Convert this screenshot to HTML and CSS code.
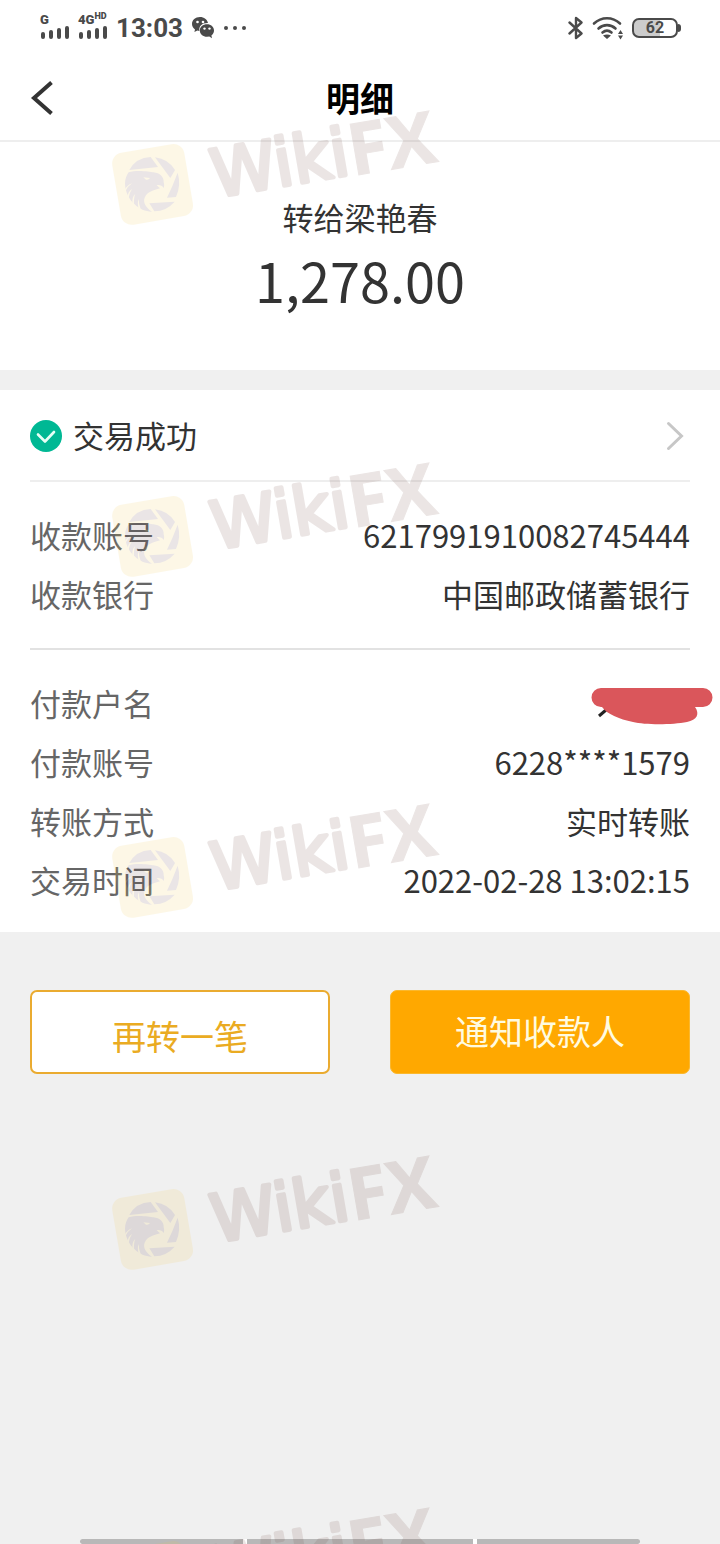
FILE: index.html
```html
<!DOCTYPE html>
<html lang="zh-CN">
<head>
  <meta charset="UTF-8">
  <meta name="viewport" content="width=device-width, initial-scale=1.0">
  <title>明细</title>
  <link rel="stylesheet" href="styles.css">
</head>
<body>
  <!-- Status bar -->
  <div class="status-bar">
    <div class="status-left">
      <div class="signal">
        <span class="signal-label">G</span>
        <svg width="30" height="14" viewBox="0 0 30 14">
          <path d="M3 9v3M11 7v5M19 5v7M27 3v9" stroke="#4a4a4a" stroke-width="4" stroke-linecap="round"/>
        </svg>
      </div>
      <div class="signal">
        <span class="signal-label">4G<sup>HD</sup></span>
        <svg width="30" height="14" viewBox="0 0 30 14">
          <path d="M3 9v3M11 7v5M19 5v7M27 3v9" stroke="#4a4a4a" stroke-width="4" stroke-linecap="round"/>
        </svg>
      </div>
      <span class="clock">13:03</span>
      <svg class="wechat" width="24" height="24" viewBox="0 0 24 24">
        <path fill="#4a4a4a" d="M9 1C4.300 1 1 4 1 8c0 2.200 1.100 4.100 3 5.400L3.400 16l3-1.500 2 .4C7.500 10 11.500 6.700 17 7 16.200 3.500 13 1 9 1z"/>
        <path fill="#4a4a4a" d="M16 8.200c-4 0-7.200 2.700-7.200 6.300s3.200 6.300 7.200 6.300l2.300-.3 2.700 1.700-.6-2.700c1.600-1.200 2.600-2.900 2.600-5 0-3.600-3-6.300-7-6.300z"/>
        <circle cx="6.500" cy="6" r="1.300" fill="#fff"/><circle cx="12" cy="6" r="1.300" fill="#fff"/>
        <circle cx="13.500" cy="12.600" r="1.200" fill="#fff"/><circle cx="18.500" cy="12.600" r="1.200" fill="#fff"/>
      </svg>
      <svg width="24" height="6" viewBox="0 0 24 6" fill="#4a4a4a">
        <circle cx="3" cy="3" r="2"/><circle cx="12" cy="3" r="2"/><circle cx="21" cy="3" r="2"/>
      </svg>
    </div>
    <div class="status-right">
      <svg width="16" height="24" viewBox="0 0 16 24">
        <path d="M1.500 6.500l12 11L8 22V2l5.500 4.500-12 11" fill="none" stroke="#4a4a4a" stroke-width="2.400" stroke-linejoin="round" stroke-linecap="round"/>
      </svg>
      <svg width="32" height="24" viewBox="0 0 32 24">
        <path d="M2 7.500C9.500.500 20.500.500 28 7.500M6.500 12.500c5-4.500 12-4.500 17 0M10.500 16.500c3-2.500 6-2.500 9 0" fill="none" stroke="#4a4a4a" stroke-width="2.600" stroke-linecap="round"/>
        <path d="M11 19.500c2.500-1.500 5.500-1.500 8 0L15 23zM28.500 14l2.500 4h-5zM28.500 23.500l2.500-4h-5z" fill="#4a4a4a"/>
      </svg>
      <div class="battery">62</div>
    </div>
  </div>

  <!-- Page header -->
  <header class="nav-bar">
    <button class="back-button" aria-label="返回">
      <svg width="24" height="34" viewBox="0 0 24 34">
        <path d="M21.500 1.500L4 17l17.500 15.500" fill="none" stroke="#333" stroke-width="4"/>
      </svg>
    </button>
    <h1>明细</h1>
  </header>

  <main>
    <section class="summary">
      <p class="payee">转给梁艳春</p>
      <p class="amount">1,278.00</p>
    </section>

    <section class="detail">
      <button class="result">
        <svg width="32" height="32" viewBox="0 0 32 32">
          <circle cx="16" cy="16" r="16" fill="#00b894"/>
          <path d="M8 14.500l7 7 9-9.500" fill="none" stroke="#e6fff6" stroke-width="2.600" stroke-linecap="round" stroke-linejoin="round"/>
        </svg>
        <span>交易成功</span>
        <svg class="chevron" width="18" height="30" viewBox="0 0 18 30">
          <path d="M2.500 2.500L15.500 15l-13 12.500" fill="none" stroke="#c7c7c7" stroke-width="3" stroke-linecap="round"/>
        </svg>
      </button>

      <dl class="rows">
        <div class="row"><dt>收款账号</dt><dd>6217991910082745444</dd></div>
        <div class="row"><dt>收款银行</dt><dd>中国邮政储蓄银行</dd></div>
      </dl>

      <dl class="rows rows-payer">
        <div class="row">
          <dt>付款户名</dt>
          <dd class="hidden-name">
            <svg width="124" height="44" viewBox="0 0 124 44">
              <path d="M9 35l7-6" stroke="#222" stroke-width="3"/>
              <path fill="#da565b" d="M11 7h102a9 9 0 0 1 0 19h-8c5 7 2 13-8 15-15 3-42 3-54 0-14-3-26-8-31-15h-1a9 9 0 0 1 0-19z"/>
            </svg>
          </dd>
        </div>
        <div class="row"><dt>付款账号</dt><dd>6228****1579</dd></div>
        <div class="row"><dt>转账方式</dt><dd>实时转账</dd></div>
        <div class="row"><dt>交易时间</dt><dd>2022-02-28 13:02:15</dd></div>
      </dl>
    </section>

    <div class="actions">
      <button class="btn btn-outline">再转一笔</button>
      <button class="btn btn-solid">通知收款人</button>
    </div>
  </main>

  <div class="gesture-bar"><span></span><span></span><span></span></div>

  <!-- Watermarks -->
  <div class="watermarks" aria-hidden="true">
    <svg class="mark mark-1" viewBox="0 0 340 124">
      <g id="wikifx">
        <g transform="translate(47 80) rotate(-9.700)">
          <rect x="-36" y="-36" width="73" height="73" rx="11" fill="#f0c846"/>
          <text class="mark-wiki" x="60" y="24">Wiki</text>
          <text class="mark-fx" x="199" y="26">FX</text>
        </g>
        <g transform="translate(-5 1) scale(.3333)">
          <g fill="#643c46">
            <path d="M88 195Q108 158 152 156L174 186z"/>
            <path d="M165 157Q205 162 225 195L211 219z"/>
            <path d="M233 203Q244 240 228 276L201 278Q218 244 233 203z"/>
            <path d="M148 295L224 290Q200 318 163 319z"/>
            <path d="M86 202C110 194 150 200 160 202C180 204 192 216 191 232C193 238 193 245 191 249C186 241 178 239 170 241L180 250C160 256 142 260 134 278C128 292 138 308 156 320C136 320 118 312 104 298C88 284 76 262 75 236C75 222 80 210 86 202z"/>
          </g>
          <g fill="#f0c846">
            <path d="M130 217l20 2q-4 7-12 5z"/>
            <path d="M74 254q8-14 22-19-12 8-20 24z"/>
            <path d="M82 276q2-16 14-24-8 12-11 29z"/>
            <path d="M98 296q-4-18 8-30-5 12-4 34z"/>
            <path d="M116 310q-5-16 0-28 0 14 6 30z"/>
          </g>
        </g>
      </g>
    </svg>
    <svg class="mark mark-2" viewBox="0 0 340 124"><use href="#wikifx"/></svg>
    <svg class="mark mark-3" viewBox="0 0 340 124"><use href="#wikifx"/></svg>
    <svg class="mark mark-4" viewBox="0 0 340 124"><use href="#wikifx"/></svg>
    <svg class="mark mark-5" viewBox="0 0 340 124"><use href="#wikifx"/></svg>
  </div>
</body>
</html>
```

FILE: styles.css
```css
* {
  margin: 0;
  padding: 0;
  box-sizing: border-box;
}

body {
  position: relative;
  display: flex;
  flex-direction: column;
  min-height: 100vh;
  background: #f0f0f0;
  color: #333;
  font-family: "Noto Sans CJK SC", sans-serif;
  font-size: 31px;
}

button {
  border: none;
  background: none;
  color: inherit;
  font: inherit;
  cursor: pointer;
}

svg {
  display: block;
  flex-shrink: 0;
}

/* Status bar */
.status-bar {
  display: flex;
  justify-content: space-between;
  align-items: center;
  height: 56px;
  padding: 0 40px;
  background: #fff;
  color: #4a4a4a;
  font-family: Roboto, sans-serif;
}

.status-left,
.status-right {
  display: flex;
  align-items: center;
  gap: 8px;
}

.signal {
  width: 30px;
  padding-bottom: 4px;
}

.signal-label {
  display: block;
  height: 11px;
  font-size: 13px;
  font-weight: 900;
  line-height: 12px;
  white-space: nowrap;
}

.signal-label sup {
  font-size: 9px;
  line-height: 1px;
}

.clock {
  font-size: 26px;
  font-weight: 700;
}

.battery {
  position: relative;
  width: 46px;
  height: 20px;
  margin-right: 2px;
  border: 2px solid #4a4a4a;
  border-radius: 7px;
  background: linear-gradient(to right, #ccc 62%, #fff 62%);
  font-size: 16px;
  font-weight: 700;
  line-height: 16px;
  text-align: center;
}

.battery::after {
  content: "";
  position: absolute;
  top: 4px;
  right: -5px;
  width: 3px;
  height: 8px;
  border-radius: 0 3px 3px 0;
  background: #4a4a4a;
}

/* Header */
.nav-bar {
  display: grid;
  grid-template-columns: 1fr auto 1fr;
  align-items: center;
  height: 86px;
  padding: 0 30px;
  background: #fff;
  border-bottom: 2px solid #eee;
}

.back-button {
  justify-self: start;
}

.nav-bar h1 {
  color: #000;
  font-size: 34px;
  font-weight: 700;
  line-height: 50px;
}

/* Amount */
.summary {
  height: 228px;
  padding-top: 52px;
  background: #fff;
  text-align: center;
}

.payee {
  line-height: 46px;
}

.amount {
  font-size: 54px;
  line-height: 80px;
}

/* Detail card */
.detail {
  margin-top: 20px;
  padding: 0 30px 23px;
  background: #fff;
}

.result {
  display: flex;
  align-items: center;
  gap: 11px;
  width: 100%;
  height: 92px;
  padding-top: 2px;
  border-bottom: 2px solid #eee;
}

.result span {
  line-height: 46px;
  padding-bottom: 2px;
}

.chevron {
  margin-left: auto;
  margin-right: 6px;
}

.rows {
  padding: 23px 0 25px;
}

.rows-payer {
  padding-bottom: 0;
  border-top: 2px solid #e2e2e2;
}

.row {
  display: flex;
  justify-content: space-between;
  align-items: center;
  line-height: 59px;
}

.row dt {
  color: #666;
}

.hidden-name {
  margin-right: -24px;
}

/* Buttons */
.actions {
  display: grid;
  grid-template-columns: 1fr 1fr;
  gap: 60px;
  padding: 58px 30px;
}

.btn {
  height: 84px;
  border-radius: 7px;
  font-size: 34px;
}

.btn-outline {
  padding-top: 6px;
  border: 2px solid #eaab30;
  background: #fff;
  color: #eaab22;
}

.btn-solid {
  padding-bottom: 4px;
  border: 1px solid #fab82e;
  background: #ffa800;
  color: #fffbe0;
}

/* Bottom gesture bar */
.gesture-bar {
  display: grid;
  grid-template-columns: 163fr 226fr 163fr;
  gap: 4px;
  height: 5px;
  margin: auto 80px 0;
  background: #fff;
  border-radius: 3px 3px 0 0;
}

.gesture-bar span {
  background: #b8b8b8;
}

.gesture-bar span:first-child {
  border-radius: 3px 0 0 3px;
}

.gesture-bar span:last-child {
  border-radius: 0 3px 3px 0;
}

/* Watermarks */
.watermarks {
  position: absolute;
  inset: 0;
  overflow: hidden;
  pointer-events: none;
}

.mark {
  position: absolute;
  left: 105px;
  width: 340px;
  height: 124px;
  overflow: visible;
  opacity: .13;
}

.mark-1 { top: 104px; }
.mark-2 { top: 456px; }
.mark-3 { top: 797px; }
.mark-4 { top: 1149px; }
.mark-5 { top: 1501px; }

.mark-wiki,
.mark-fx {
  fill: #6c4038;
  stroke: #6c4038;
}

.mark-wiki {
  font-family: "DejaVu Sans", sans-serif;
  font-size: 66px;
  stroke-width: 4px;
  stroke-linejoin: round;
}

.mark-fx {
  font-family: "Open Sans", sans-serif;
  font-size: 72px;
  font-weight: 700;
  stroke-width: 1px;
}
```
